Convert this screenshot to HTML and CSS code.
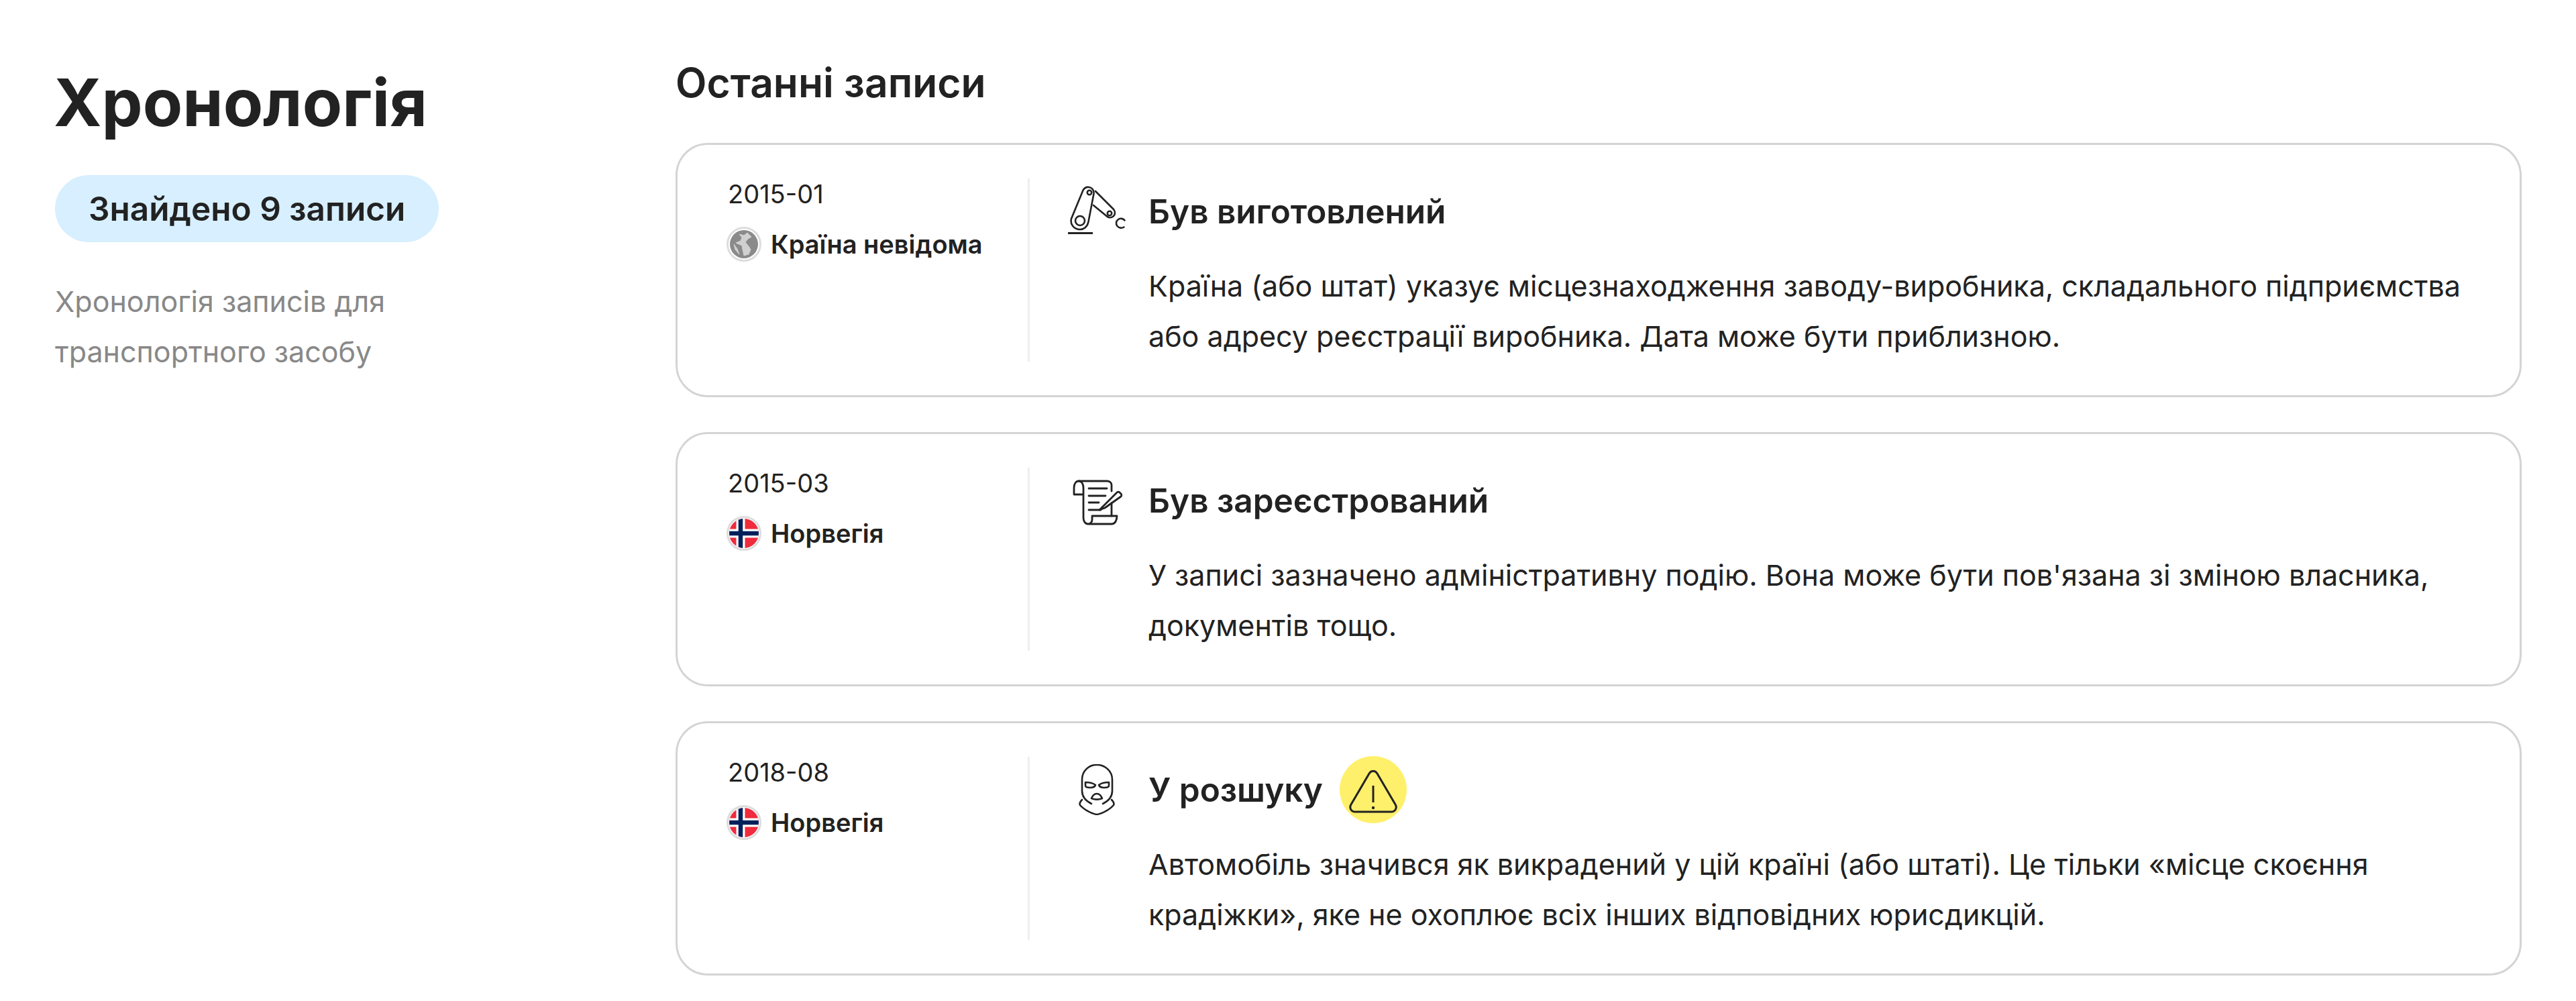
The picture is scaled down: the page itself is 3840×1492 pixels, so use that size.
FILE: index.html
```html
<!DOCTYPE html>
<html>
<head>
  <title>Хронологія</title>
  <link rel="stylesheet" href="styles.css">
</head>
<body>
  <div class="page">
    <div class="sidebar">
      <h1 class="page-title">Хронологія</h1>
      <div class="found-pill">Знайдено 9 записи</div>
      <p class="sidebar-text">Хронологія записів для транспортного засобу</p>
    </div>

    <div class="main">
      <h2 class="main-title">Останні записи</h2>

      <div class="record">
        <div class="record-meta">
          <div class="record-date">2015-01</div>
          <div class="record-country">
            <svg class="flag" viewBox="0 0 52 52">
              <circle cx="26" cy="26" r="24.5" fill="#fff" stroke="#ddd" stroke-width="3"/>
              <circle cx="26" cy="26" r="21" fill="#8a8a8a"/>
              <path d="M19 11l7 2 5-4 6 6-5 3-4 5 5 6 3 5-3 7-7 2-2-9-1-6-9-4 7-3 2-5zM11 26l5 7 3 8-6-7z" fill="#d0d0d0" stroke="#d0d0d0" stroke-linejoin="round"/>
            </svg>
            <span>Країна невідома</span>
          </div>
        </div>
        <div class="record-body">
          <div class="record-head">
            <svg class="record-icon" viewBox="30 0 90 76">
              <g fill="none" stroke="#222" stroke-width="2.6" stroke-linecap="round">
                <path d="M54.500 6.500c2-3.500 5.500-5 9-4.500 4.500.5 7.500 5 7 9.500l-8 42c-1.500 7.500-7 12-13.500 11.500-8.500-.5-14-8-12-16z"/>
                <circle cx="50" cy="52" r="7"/>
                <circle cx="64" cy="10" r="3.200"/>
                <path d="M73 8l27 27c3 3.500 2.500 8-.5 10.500-3 2.500-7 2.500-10-.5L70 29"/>
                <circle cx="94" cy="41" r="3.200"/>
                <path d="M116.500 51.500c-2-3-6.500-3.500-9.500-1.500-3.500 2.500-4 7-1.500 10 2.500 3 7 3.500 10 1.500"/>
              </g>
              <path d="M32 70.500h37" stroke="#222" stroke-width="3"/>
            </svg>
            <h3 class="record-title">Був виготовлений</h3>
          </div>
          <p class="record-text">Країна (або штат) указує місцезнаходження заводу-виробника, складального підприємства або адресу реєстрації виробника. Дата може бути приблизною.</p>
        </div>
      </div>

      <div class="record">
        <div class="record-meta">
          <div class="record-date">2015-03</div>
          <div class="record-country">
            <svg class="flag" viewBox="0 0 52 52">
              <use href="#flag-no"/>
            </svg>
            <span>Норвегія</span>
          </div>
        </div>
        <div class="record-body">
          <div class="record-head">
            <svg class="record-icon" viewBox="20 6 90 76">
              <g fill="none" stroke="#222" stroke-width="2.800" stroke-linecap="round" stroke-linejoin="round">
                <path d="M38 15h42c4 0 7 2 7 6v9M87 48v19"/>
                <path d="M45 35H31V25c0-6 3-10 7-10s7 4 7 10v45c0 5 3 9 7 9h35c5 0 8-5 8-12H58v6c0 3-3 6-6 6"/>
                <path d="M53 26h27M53 37h25M53 47h15M53 58h18"/>
                <path d="M70 57l25-25c1-1 3-1 4 0l2 2c1 1 1 3 0 4L77 55l-8 3z"/>
              </g>
            </svg>
            <h3 class="record-title">Був зареєстрований</h3>
          </div>
          <p class="record-text">У записі зазначено адміністративну подію. Вона може бути пов'язана зі зміною власника, документів тощо.</p>
        </div>
      </div>

      <div class="record">
        <div class="record-meta">
          <div class="record-date">2018-08</div>
          <div class="record-country">
            <svg class="flag" viewBox="0 0 52 52">
              <use href="#flag-no"/>
            </svg>
            <span>Норвегія</span>
          </div>
        </div>
        <div class="record-body">
          <div class="record-head">
            <svg class="record-icon" viewBox="10 22 90 76">
              <g fill="none" stroke="#222" stroke-width="2.600" stroke-linecap="round" stroke-linejoin="round">
                <path d="M47 81c-8-4-14-10-14-19V45c0-13 10-22 22-22s23 9 23 22v17c0 9-6 15-14 19"/>
                <path d="M38 49c5 0 11 1 15 4-1 3-4 4-8 4-4 0-7-1-7-3zM73 49c-5 0-11 1-15 4 1 3 4 4 8 4 4 0 7-1 7-3z"/>
                <path d="M47 73c2-5 5-7 8-7s6 2 8 7c-5 2-11 2-16 0z"/>
                <path d="M33 75c-3 3-4 6-3 8 5 6 17 13 25 14 8-1 20-8 25-14 1-2 0-5-3-8"/>
              </g>
            </svg>
            <h3 class="record-title">У розшуку</h3>
            <span class="warning-badge">
              <svg viewBox="0 0 100 100">
                <path d="M44 26L17 72c-3 5 0 11 6 11h54c6 0 9-6 6-11L56 26c-3-5-9-5-12 0z" fill="none" stroke="#222" stroke-width="3"/>
                <path d="M50 44v25" stroke="#222" stroke-width="3"/>
                <circle cx="50" cy="77" r="2.200" fill="#222"/>
              </svg>
            </span>
          </div>
          <p class="record-text">Автомобіль значився як викрадений у цій країні (або штаті). Це тільки «місце скоєння крадіжки», яке не охоплює всіх інших відповідних юрисдикцій.</p>
        </div>
      </div>
    </div>
  </div>

  <svg class="svg-defs">
    <defs>
      <g id="flag-no">
        <circle cx="26" cy="26" r="24.500" fill="#fff" stroke="#ddd" stroke-width="3"/>
        <clipPath id="flag-clip"><circle cx="26" cy="26" r="22"/></clipPath>
        <g clip-path="url(#flag-clip)">
          <rect width="52" height="52" fill="#ef2b3d"/>
          <path d="M21 0v52M0 26h52" stroke="#fff" stroke-width="13"/>
          <path d="M21 0v52M0 26h52" stroke="#00205b" stroke-width="6.500"/>
        </g>
      </g>
    </defs>
  </svg>
</body>
</html>
```

FILE: styles.css
```css
body {
  font-family: Inter, "Liberation Sans", sans-serif;
  margin: 0;
  background-color: #fff;
  color: #222;
}

.page {
  display: flex;
  padding: 0 81px 37px 80px;
}

.sidebar {
  width: 927px;
  flex-shrink: 0;
}

.page-title {
  margin: 88px 0 0;
  font-size: 97px;
  line-height: 130px;
  font-weight: 700;
}

.found-pill {
  display: inline-block;
  margin: 43px 0 0 2px;
  padding: 0 50px;
  height: 100px;
  line-height: 100px;
  border-radius: 50px;
  background-color: #d7efff;
  font-size: 49.500px;
  font-weight: 600;
}

.sidebar-text {
  margin: 51px 0 0 2px;
  width: 560px;
  font-size: 43px;
  line-height: 75px;
  color: #888;
}

.main {
  flex-grow: 1;
}

.main-title {
  margin: 0;
  padding-top: 83px;
  font-size: 60.500px;
  line-height: 80px;
  font-weight: 600;
  height: 130px;
}

.record {
  display: flex;
  box-sizing: border-box;
  height: 379px;
  margin-bottom: 52px;
  padding: 50px 60px 50px 0;
  border: 3px solid #d4d4d4;
  border-radius: 48px;
}

.record:last-child {
  margin-bottom: 0;
}

.record-meta {
  box-sizing: border-box;
  width: 525px;
  padding-left: 75px;
  border-right: 3px solid #eee;
  flex-shrink: 0;
}

.record-date {
  font-size: 38px;
  line-height: 50px;
  margin-top: -2px;
}

.record-country {
  display: flex;
  align-items: center;
  gap: 14px;
  margin-top: 24px;
  font-size: 38px;
  line-height: 52px;
  font-weight: 600;
}

.flag {
  width: 52px;
  height: 52px;
  margin-left: -2px;
}

.record-body {
  padding-left: 55px;
}

.record-head {
  display: flex;
  align-items: center;
  height: 100px;
  margin-top: -1px;
}

.record-icon {
  width: 90px;
  height: 76px;
  margin-right: 32px;
  flex-shrink: 0;
}

.record-title {
  margin: 0;
  font-size: 49.500px;
  font-weight: 600;
}

.warning-badge {
  display: block;
  width: 100px;
  height: 100px;
  margin-left: 25px;
  border-radius: 50%;
  background-color: #fff06b;
}

.warning-badge svg {
  display: block;
  width: 100px;
  height: 100px;
}

.record-text {
  margin: 24px 0 0 122px;
  font-size: 43px;
  line-height: 75px;
}

.svg-defs {
  display: block;
  width: 0;
  height: 0;
}
```
